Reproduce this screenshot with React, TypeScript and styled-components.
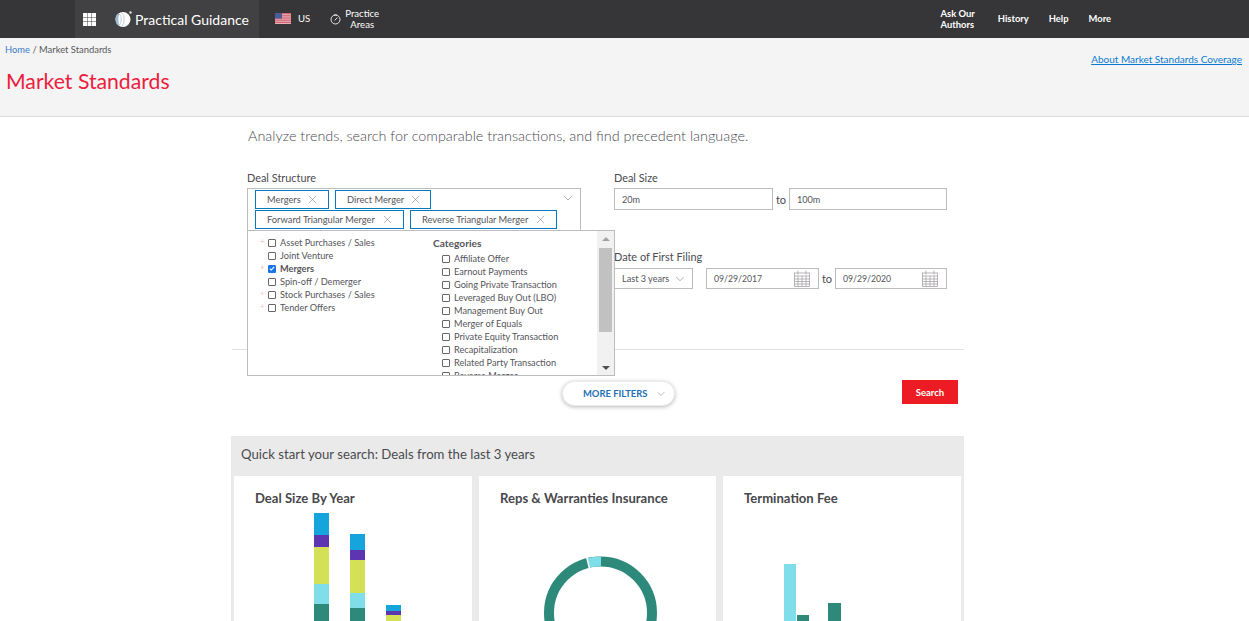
import React from 'react'
import styled, { createGlobalStyle } from 'styled-components'
import { ChevronDown, X } from 'lucide-react'

const GlobalStyle = createGlobalStyle`
  html, body {
    margin: 0;
    height: 621px;
    overflow: hidden;
    background: #fff;
  }
  body {
    font-family: Lato, "Liberation Sans", sans-serif;
    color: #4a4a4f;
  }
  * {
    box-sizing: border-box;
  }
`

const TopBar = styled.header`
  display: flex;
  align-items: stretch;
  height: 38px;
  padding-left: 75px;
  background: #363538;
  color: #fff;
`

const BrandBlock = styled.div`
  display: flex;
  align-items: center;
  width: 184px;
  padding-left: 8px;
  background: #414042;
`

const LogoGap = styled.span`
  width: 19px;
`

const Brand = styled.span`
  margin-left: 2px;
  font-size: 14px;
`

const NavLeft = styled.nav`
  display: flex;
  align-items: center;
  padding: 0 0 1px 16px;
  font-size: 9.6px;
`

const NavRight = styled.nav`
  display: flex;
  align-items: center;
  gap: 20px;
  margin-left: auto;
  padding: 0 138px 1px 0;
  font-size: 9.4px;
  font-weight: 700;
`

const NavItem = styled.span<{ $center?: boolean }>`
  line-height: 11px;
  text-align: ${p => (p.$center ? 'center' : 'left')};
`

const AuthorsItem = styled(NavItem)`
  margin-right: 3px;
`

const FlagWrap = styled.span`
  display: flex;
  margin-right: 7px;
`

const CompassWrap = styled.span`
  display: flex;
  margin: 0 4px 0 20px;
`

const SubHeader = styled.section`
  display: flex;
  justify-content: space-between;
  height: 79px;
  padding: 6px 7px 0 5px;
  background: #f4f4f4;
  border-bottom: 1px solid #dcdcdc;
`

const Crumbs = styled.div`
  font-size: 9.4px;
  line-height: 12px;
  color: #58585c;
`

const CrumbLink = styled.a`
  color: #3d7bc4;
`

const Title = styled.h1`
  margin: 11px 0 0 1px;
  font-size: 21.2px;
  line-height: 28px;
  font-weight: 400;
  color: #ed1c3c;
`

const CoverageLink = styled.a`
  margin-top: 9px;
  font-size: 10px;
  line-height: 12px;
  color: #0a7ad1;
  text-decoration: underline;
`

const Main = styled.main`
  width: 732px;
  margin-left: 232px;
`

const Tagline = styled.p`
  margin: 0;
  padding: 10px 0 0 16px;
  font-size: 14.4px;
  line-height: 18px;
  font-weight: 300;
  color: #4a4a4f;
`

const FormGrid = styled.div`
  display: grid;
  grid-template-columns: 334px 333px;
  column-gap: 33px;
  height: 178px;
  margin-top: 27px;
  padding-left: 15px;
  border-bottom: 1px solid #e2e2e2;
`

const Field = styled.div`
  position: relative;
`

const Label = styled.div`
  height: 16px;
  font-size: 10.9px;
  line-height: 12px;
  color: #4a4a4f;
`

const DateLabel = styled(Label)`
  height: 17px;
`

const TagBox = styled.div`
  position: relative;
  display: flex;
  flex-wrap: wrap;
  align-content: flex-start;
  gap: 1px 6px;
  height: 42px;
  padding: 1px 20px 0 7px;
  border: 1px solid #bdbdbd;
  border-bottom: 0;
`

const Tag = styled.span<{ $width: number }>`
  display: flex;
  align-items: center;
  justify-content: space-between;
  width: ${p => p.$width}px;
  height: 19px;
  padding: 0 9px 0 11px;
  border: 1px solid #0a78bf;
  font-size: 9.3px;
  color: #55555a;
  white-space: nowrap;
`

const TagClose = styled(X)`
  flex: none;
  margin-left: 5px;
  color: #77777b;
`

const BoxChevron = styled(ChevronDown)`
  position: absolute;
  top: 1px;
  right: 4px;
  color: #8a8a8d;
`

const Menu = styled.div`
  position: absolute;
  z-index: 2;
  top: 58px;
  left: 0;
  display: flex;
  justify-content: space-between;
  width: 368px;
  height: 146px;
  overflow: hidden;
  background: #fff;
  border: 1px solid #bdbdbd;
`

const MenuColumns = styled.div`
  display: grid;
  grid-template-columns: 165px 1fr;
  padding: 5px 0 0 20px;
`

const OptionList = styled.div`
  display: flex;
  flex-direction: column;
`

const Option = styled.label<{ $bold?: boolean }>`
  position: relative;
  display: flex;
  align-items: center;
  gap: 4px;
  height: 13px;
  font-size: 9.2px;
  font-weight: ${p => (p.$bold ? 700 : 400)};
  color: #55555a;
  white-space: nowrap;
`

const Plus = styled.span`
  position: absolute;
  left: -8px;
  top: 0;
  font-size: 8px;
  line-height: 10px;
  color: #f0c4b8;
`

const Check = styled.span<{ $on?: boolean }>`
  display: flex;
  align-items: center;
  justify-content: center;
  flex: none;
  width: 8px;
  height: 8px;
  border: 1px solid ${p => (p.$on ? '#1a73e8' : '#66666a')};
  border-radius: 1px;
  background: ${p => (p.$on ? '#1a73e8' : '#fff')};
`

const CategoryTitle = styled.div`
  height: 15px;
  margin-top: 1px;
  font-size: 10.2px;
  line-height: 13px;
  font-weight: 700;
  color: #55555a;
`

const CategoryList = styled(OptionList)`
  padding-left: 9px;
`

const Scrollbar = styled.div`
  display: flex;
  flex-direction: column;
  align-items: center;
  flex: none;
  width: 17px;
  height: 100%;
  background: #f1f1f1;
`

const ScrollArrow = styled.span<{ $down?: boolean }>`
  width: 0;
  height: 0;
  margin: ${p => (p.$down ? 'auto 0 5px' : '6px 0 0')};
  border-left: 4px solid transparent;
  border-right: 4px solid transparent;
  border-${p => (p.$down ? 'top' : 'bottom')}: 4px solid ${p => (p.$down ? '#505050' : '#a3a3a3')};
`

const ScrollThumb = styled.div`
  width: 13px;
  height: 84px;
  margin-top: 7px;
  background: #c1c1c1;
`

const RightColumn = styled.div`
  display: flex;
  flex-direction: column;
`

const DateField = styled.div`
  margin-top: 41px;
`

const InlineRow = styled.div`
  display: flex;
  align-items: center;
`

const TextBox = styled.div<{ $width: number }>`
  position: relative;
  display: flex;
  align-items: center;
  width: ${p => p.$width}px;
  height: 22px;
  padding-left: 7px;
  border: 1px solid #bdbdbd;
  font-size: 9.1px;
  color: #55555a;
`

const DateBox = styled(TextBox)`
  justify-content: space-between;
  height: 21px;
  padding-right: 8px;
  font-size: 8.7px;
`

const To = styled.span`
  width: 16px;
  font-size: 11px;
  text-align: center;
  color: #4a4a4f;
`

const RangeSelect = styled(TextBox)`
  gap: 4px;
  height: 21px;
  margin-right: 13px;
`

const Actions = styled.div`
  position: relative;
  display: flex;
  height: 86px;
  padding: 31px 0 0 330px;
`

const MoreFilters = styled.button`
  display: flex;
  align-items: center;
  gap: 8px;
  width: 113px;
  height: 25px;
  padding: 0 0 0 20px;
  background: #fff;
  border: 1px solid #ececec;
  border-radius: 13px;
  box-shadow: 0 1px 4px rgba(0, 0, 0, 0.28);
  font-family: inherit;
  font-size: 9.4px;
  font-weight: 700;
  color: #1b6fb5;
  white-space: nowrap;
`

const SearchButton = styled.button`
  position: absolute;
  top: 30px;
  right: 6px;
  width: 56px;
  height: 24px;
  background: #ed1c24;
  border: 0;
  font-family: inherit;
  font-size: 9.5px;
  font-weight: 700;
  color: #fff;
`

const QuickStart = styled.section`
  height: 300px;
  margin-left: -1px;
  padding: 0 3px;
  background: #eaeaea;
`

const QuickTitle = styled.h2`
  margin: 0;
  padding: 10px 7px 0;
  height: 40px;
  font-size: 13.2px;
  line-height: 17px;
  font-weight: 400;
  color: #4a4a4f;
`

const Cards = styled.div`
  display: grid;
  grid-template-columns: 238px 237px 238px;
  column-gap: 7px;
`

const Card = styled.article`
  position: relative;
  height: 260px;
  padding: 14px 21px 0;
  background: #fff;
`

const CardTitle = styled.h3`
  margin: 0;
  font-size: 13.1px;
  line-height: 16px;
  font-weight: 700;
  color: #48484c;
`

const ChartSvg = styled.svg`
  position: absolute;
  top: 0;
  left: 0;
  z-index: 0;
`

const CalendarIcon = () => (
  <svg width="16" height="17" viewBox="0 0 16 17" fill="none" stroke="#a8a2a8" strokeWidth="0.8">
    <rect x="0.5" y="3" width="15" height="13.5" />
    <path d="M0.5 6h15M0.5 9h15M0.5 11.5h15M0.5 14h15M4 6v10.5M8 6v10.5M12 6v10.5M4 0.5v4M12 0.5v4" />
  </svg>
)

const GridIcon = () => (
  <svg width="13" height="13" viewBox="0 0 13 13" fill="#fff">
    {[0, 4.5, 9].map(y =>
      [0, 4.5, 9].map(x => <rect key={`${x}-${y}`} x={x} y={y} width="4" height="4" />)
    )}
  </svg>
)

const LogoIcon = () => (
  <svg width="18" height="18" viewBox="0 0 18 18">
    <circle cx="8" cy="9.5" r="7.5" fill="#fff" />
    <ellipse cx="3.6" cy="9.5" rx="3" ry="6" fill="#9db8cf" />
    <ellipse cx="4.6" cy="9.5" rx="1.2" ry="5" fill="#fff" />
    <path d="M6.5 2.4A8 8 0 0 1 9 9.5 8 8 0 0 1 6.5 16.6" fill="none" stroke="#c9c9cc" strokeWidth="1" />
    <circle cx="15.5" cy="2.5" r="1.2" fill="#e4e4e4" />
  </svg>
)

const FlagIcon = () => (
  <svg width="16" height="11" viewBox="0 0 16 11">
    <rect width="16" height="11" fill="#e8b4bb" />
    {[0, 2.2, 4.4, 6.6, 8.8].map(y => (
      <rect key={y} y={y} width="16" height="1.2" fill="#d2626f" />
    ))}
    <rect width="7" height="5.6" fill="#4b5b96" />
  </svg>
)

const CompassIcon = () => (
  <svg width="11" height="12" viewBox="0 0 11 12" fill="none" stroke="#e8e8e8" strokeWidth="1">
    <circle cx="5.5" cy="6.5" r="4.5" />
    <path d="M4 2h3M7.4 4.6L4.6 7.4" />
  </svg>
)

const TickIcon = () => (
  <svg width="7" height="7" viewBox="0 0 7 7" fill="none" stroke="#fff" strokeWidth="1.3">
    <path d="M1 3.6l1.7 1.7L6 1.6" />
  </svg>
)

type Segment = { color: string, y: number, h: number }

const teal = '#2d8a7b'
const cyan = '#80deea'
const lime = '#d4e157'
const purple = '#5e35b1'
const blue = '#15a5dc'

const sizeBars: { x: number, segments: Segment[] }[] = [
  {
    x: 80,
    segments: [
      { color: blue, y: 37, h: 22 },
      { color: purple, y: 59, h: 12 },
      { color: lime, y: 71, h: 37 },
      { color: cyan, y: 108, h: 20 },
      { color: teal, y: 128, h: 40 },
    ],
  },
  {
    x: 116,
    segments: [
      { color: blue, y: 58, h: 16 },
      { color: purple, y: 74, h: 10 },
      { color: lime, y: 84, h: 33 },
      { color: cyan, y: 117, h: 15 },
      { color: teal, y: 132, h: 36 },
    ],
  },
  {
    x: 152,
    segments: [
      { color: blue, y: 129, h: 6 },
      { color: purple, y: 135, h: 4 },
      { color: lime, y: 139, h: 20 },
    ],
  },
]

const assetOptions = [
  { name: 'Asset Purchases / Sales', plus: true },
  { name: 'Joint Venture' },
  { name: 'Mergers', plus: true, on: true },
  { name: 'Spin-off / Demerger' },
  { name: 'Stock Purchases / Sales', plus: true },
  { name: 'Tender Offers', plus: true },
]

const categories = [
  'Affiliate Offer',
  'Earnout Payments',
  'Going Private Transaction',
  'Leveraged Buy Out (LBO)',
  'Management Buy Out',
  'Merger of Equals',
  'Private Equity Transaction',
  'Recapitalization',
  'Related Party Transaction',
  'Reverse Merger',
]

const tags = [
  { name: 'Mergers', width: 74 },
  { name: 'Direct Merger', width: 96 },
  { name: 'Forward Triangular Merger', width: 149 },
  { name: 'Reverse Triangular Merger', width: 147 },
]

export default function App() {
  return (
    <>
      <GlobalStyle />
      <TopBar>
        <BrandBlock>
          <GridIcon />
          <LogoGap />
          <LogoIcon />
          <Brand>Practical Guidance</Brand>
        </BrandBlock>
        <NavLeft>
          <FlagWrap><FlagIcon /></FlagWrap>
          <NavItem>US</NavItem>
          <CompassWrap><CompassIcon /></CompassWrap>
          <NavItem $center>Practice<br />Areas</NavItem>
        </NavLeft>
        <NavRight>
          <AuthorsItem>Ask Our<br />Authors</AuthorsItem>
          <NavItem>History</NavItem>
          <NavItem>Help</NavItem>
          <NavItem>More</NavItem>
        </NavRight>
      </TopBar>

      <SubHeader>
        <div>
          <Crumbs><CrumbLink>Home</CrumbLink> / Market Standards</Crumbs>
          <Title>Market Standards</Title>
        </div>
        <CoverageLink>About Market Standards Coverage</CoverageLink>
      </SubHeader>

      <Main>
        <Tagline>Analyze trends, search for comparable transactions, and find precedent language.</Tagline>

        <FormGrid>
          <Field>
            <Label>Deal Structure</Label>
            <TagBox>
              {tags.map(t => (
                <Tag key={t.name} $width={t.width}>
                  {t.name}
                  <TagClose size={13} strokeWidth={1} />
                </Tag>
              ))}
              <BoxChevron size={16} strokeWidth={1} />
            </TagBox>
            <Menu>
              <MenuColumns>
                <OptionList>
                  {assetOptions.map(o => (
                    <Option key={o.name} $bold={o.on}>
                      {o.plus && <Plus>+</Plus>}
                      <Check $on={o.on}>{o.on && <TickIcon />}</Check>
                      {o.name}
                    </Option>
                  ))}
                </OptionList>
                <div>
                  <CategoryTitle>Categories</CategoryTitle>
                  <CategoryList>
                    {categories.map(c => (
                      <Option key={c}>
                        <Check />
                        {c}
                      </Option>
                    ))}
                  </CategoryList>
                </div>
              </MenuColumns>
              <Scrollbar>
                <ScrollArrow />
                <ScrollThumb />
                <ScrollArrow $down />
              </Scrollbar>
            </Menu>
          </Field>

          <RightColumn>
            <Field>
              <Label>Deal Size</Label>
              <InlineRow>
                <TextBox $width={159}>20m</TextBox>
                <To>to</To>
                <TextBox $width={158}>100m</TextBox>
              </InlineRow>
            </Field>
            <DateField>
              <DateLabel>Date of First Filing</DateLabel>
              <InlineRow>
                <RangeSelect $width={79}>
                  Last 3 years
                  <ChevronDown size={14} strokeWidth={1} color="#77777b" />
                </RangeSelect>
                <DateBox $width={113}>
                  09/29/2017
                  <CalendarIcon />
                </DateBox>
                <To>to</To>
                <DateBox $width={112}>
                  09/29/2020
                  <CalendarIcon />
                </DateBox>
              </InlineRow>
            </DateField>
          </RightColumn>
        </FormGrid>

        <Actions>
          <MoreFilters>
            MORE FILTERS
            <ChevronDown size={12} strokeWidth={1} color="#77777b" />
          </MoreFilters>
          <SearchButton>Search</SearchButton>
        </Actions>

        <QuickStart>
          <QuickTitle>Quick start your search: Deals from the last 3 years</QuickTitle>
          <Cards>
            <Card>
              <CardTitle>Deal Size By Year</CardTitle>
              <ChartSvg width="238" height="170" viewBox="0 0 238 170">
                {sizeBars.map(bar =>
                  bar.segments.map(s => (
                    <rect key={`${bar.x}-${s.y}`} x={bar.x} y={s.y} width="15" height={s.h} fill={s.color} />
                  ))
                )}
              </ChartSvg>
            </Card>
            <Card>
              <CardTitle>Reps &amp; Warranties Insurance</CardTitle>
              <ChartSvg width="237" height="170" viewBox="0 0 237 170">
                <circle cx="121.5" cy="137" r="51.5" fill="none" stroke={teal} strokeWidth="10" />
                <path d="M109 87A51.5 51.5 0 0 1 122 85.5" fill="none" stroke={cyan} strokeWidth="10" />
                <path d="M107.6 80.7L110.4 92.4" stroke="#fff" strokeWidth="1.5" />
              </ChartSvg>
            </Card>
            <Card>
              <CardTitle>Termination Fee</CardTitle>
              <ChartSvg width="238" height="170" viewBox="0 0 238 170">
                <rect x="61" y="88" width="12" height="82" fill={cyan} />
                <rect x="74" y="139" width="12" height="31" fill={teal} />
                <rect x="105" y="127" width="13" height="43" fill={teal} />
              </ChartSvg>
            </Card>
          </Cards>
        </QuickStart>
      </Main>
    </>
  )
}
